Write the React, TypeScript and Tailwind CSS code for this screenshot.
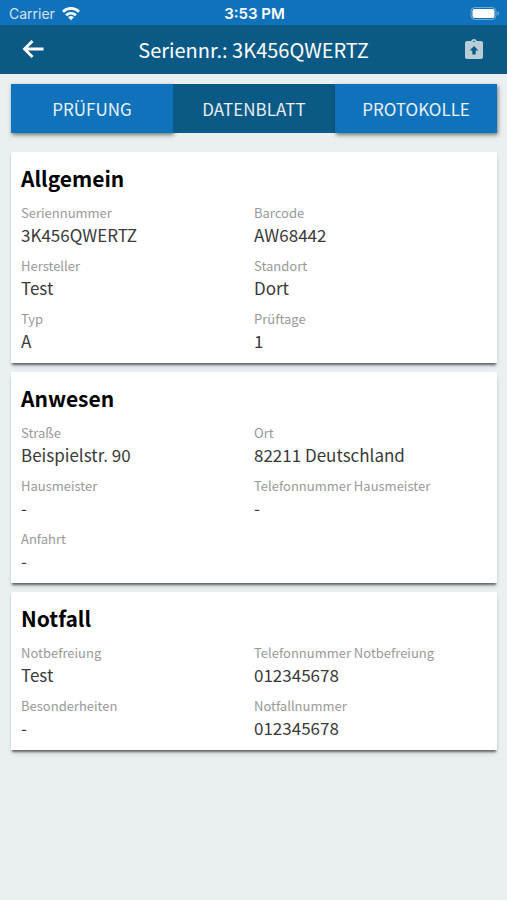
type Field = { label: string; value: string };

const tabs = ['Prüfung', 'Datenblatt', 'Protokolle'];
const activeTab = 'Datenblatt';

const sections: { title: string; fields: Field[] }[] = [
  {
    title: 'Allgemein',
    fields: [
      { label: 'Seriennummer', value: '3K456QWERTZ' },
      { label: 'Barcode', value: 'AW68442' },
      { label: 'Hersteller', value: 'Test' },
      { label: 'Standort', value: 'Dort' },
      { label: 'Typ', value: 'A' },
      { label: 'Prüftage', value: '1' },
    ],
  },
  {
    title: 'Anwesen',
    fields: [
      { label: 'Straße', value: 'Beispielstr. 90' },
      { label: 'Ort', value: '82211 Deutschland' },
      { label: 'Hausmeister', value: '-' },
      { label: 'Telefonnummer Hausmeister', value: '-' },
      { label: 'Anfahrt', value: '-' },
    ],
  },
  {
    title: 'Notfall',
    fields: [
      { label: 'Notbefreiung', value: 'Test' },
      { label: 'Telefonnummer Notbefreiung', value: '012345678' },
      { label: 'Besonderheiten', value: '-' },
      { label: 'Notfallnummer', value: '012345678' },
    ],
  },
];

function WifiIcon() {
  return (
    <svg width="18" height="14" viewBox="0 0 18 14" fill="none" stroke="white" strokeWidth="2.6" aria-hidden="true">
      <path d="M1 4.700a11.400 11.400 0 0 1 16 0" />
      <path d="M4.100 8.200a7 7 0 0 1 9.800 0" />
      <path d="M9 13.300 6.100 10.300a4.200 4.200 0 0 1 5.800 0z" fill="white" stroke="none" />
    </svg>
  );
}

function BatteryIcon() {
  return (
    <svg width="30" height="14" viewBox="0 0 30 14" aria-hidden="true">
      <rect x="1" y="0.5" width="25" height="12" rx="4" fill="none" stroke="white" strokeOpacity="0.4" />
      <rect x="2.500" y="2" width="22" height="9" rx="2" fill="white" />
      <path d="M27.500 4.300v4.400c1-.4 1.500-1.200 1.500-2.200s-.5-1.800-1.500-2.200z" fill="white" fillOpacity="0.45" />
    </svg>
  );
}

function BackIcon() {
  return (
    <svg width="24" height="20" viewBox="0 0 24 20" fill="none" stroke="white" strokeWidth="2.800" aria-hidden="true">
      <path d="M22.500 9H4M11.500 1l-8 8 8 8" />
    </svg>
  );
}

function ClipboardUpIcon() {
  return (
    <svg width="24" height="24" viewBox="0 0 24 24" fill="#b9cdd6" aria-hidden="true">
      <path
        fillRule="evenodd"
        d="M19 3h-4.180C14.400 1.840 13.300 1 12 1s-2.400.84-2.820 2H5c-1.100 0-2 .9-2 2v14c0 1.100.9 2 2 2h14c1.100 0 2-.9 2-2V5c0-1.100-.9-2-2-2zm-7-.3c.45 0 .8.35.8.8s-.35.8-.8.8-.8-.35-.8-.8.35-.8.800-.8zm0 5.300-4.500 4.500h2.800V16.500h3.400v-4h2.800z"
      />
    </svg>
  );
}

function Card({ title, fields }: { title: string; fields: Field[] }) {
  return (
    <section className="bg-white px-[10px] py-[11px] shadow-[0_3px_2px_-1px_rgba(0,0,0,0.5),0_4px_5px_-1px_rgba(0,0,0,0.15)]">
      <h2 className="mb-[10px] text-[21px] leading-[30px] font-bold text-black">{title}</h2>
      <dl className="grid grid-cols-2 gap-y-[10px]">
        {fields.map((field) => (
          <div key={field.label}>
            <dt className="text-[13px] leading-5 text-[#999999]">{field.label}</dt>
            <dd className="text-[17px] leading-[23px] text-[#3a3a3a]">{field.value}</dd>
          </div>
        ))}
      </dl>
    </section>
  );
}

export default function App() {
  return (
    <div className="min-h-screen bg-[#eaeff1] font-['Noto_Sans_CJK_SC',sans-serif]">
      <div className="grid h-[25px] grid-cols-3 items-center bg-[#0f72ba] pt-[3px] pr-[7px] pl-[9px] font-['Inter',sans-serif] text-white">
        <div className="flex items-center gap-[7px]">
          <span className="text-sm text-white/80">Carrier</span>
          <WifiIcon />
        </div>
        <span className="text-center text-[15px] leading-5 font-semibold">3:53 PM</span>
        <div className="flex justify-end">
          <BatteryIcon />
        </div>
      </div>

      <header className="flex h-[49px] items-center justify-between bg-[#0b5a85] px-[21px] text-white">
        <button type="button" aria-label="Zurück">
          <BackIcon />
        </button>
        <h1 className="text-[20px] leading-7">Seriennr.: 3K456QWERTZ</h1>
        <button type="button" aria-label="Exportieren">
          <ClipboardUpIcon />
        </button>
      </header>

      <main className="pt-[10px] pr-[10px] pb-6 pl-[11px]">
        <nav className="grid grid-cols-3">
          {tabs.map((tab) => (
            <button
              key={tab}
              type="button"
              aria-pressed={tab === activeTab}
              className={`h-[49px] text-[17px] leading-6 text-white/90 uppercase ${
                tab === activeTab ? 'bg-[#0b5a85]' : 'bg-[#0f72ba] shadow-[1px_2px_4px_rgba(0,0,0,0.5)]'
              }`}
            >
              {tab}
            </button>
          ))}
        </nav>

        <div className="mt-[19px] flex flex-col gap-[9px]">
          {sections.map((section) => (
            <Card key={section.title} title={section.title} fields={section.fields} />
          ))}
        </div>
      </main>
    </div>
  );
}
